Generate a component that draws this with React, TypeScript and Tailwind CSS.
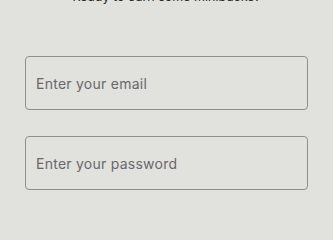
export default function App() {
  return (
    <div className="min-h-screen w-full bg-[#e1e1dd] font-['Inter','Noto_Sans',sans-serif] overflow-hidden">
      <div className="flex flex-col px-[25px]">
        <p className="-mt-[10px] h-[14px] text-center text-[12.5px] leading-[14px] text-[#2a2a2a]">
          Ready to earn some minibucks?
        </p>
        <input
          type="email"
          placeholder="Enter your email"
          className="mt-[52px] h-[54px] w-full rounded-[4px] border border-[#8f8f8f] bg-transparent px-[10px] text-[14px] tracking-[0.25px] text-[#333] placeholder:text-[#68686d] outline-none"
        />
        <input
          type="password"
          placeholder="Enter your password"
          className="mt-[26px] h-[54px] w-full rounded-[4px] border border-[#8f8f8f] bg-transparent px-[10px] text-[14px] tracking-[0.25px] text-[#333] placeholder:text-[#68686d] outline-none"
        />
      </div>
    </div>
  );
}
